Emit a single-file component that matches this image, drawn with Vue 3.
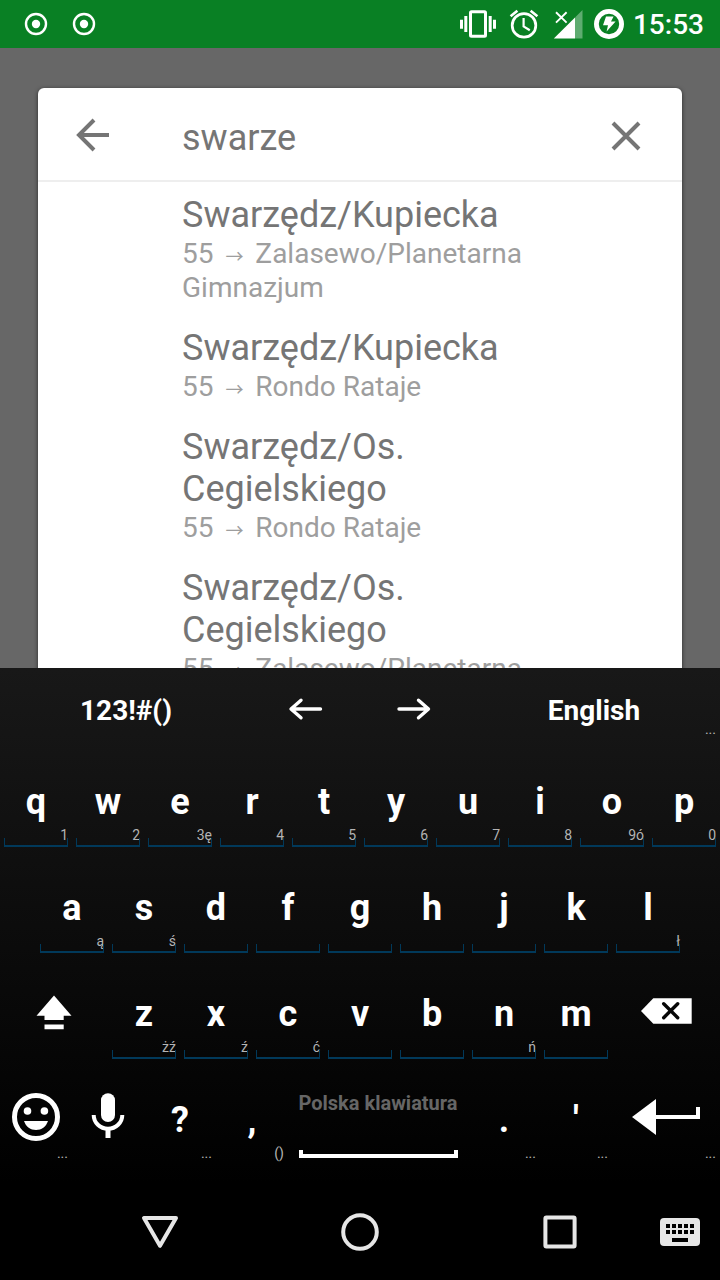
<script setup>
import { ref } from 'vue'

const query = ref('swarze')

const results = [
  { stop: 'Swarzędz/Kupiecka', line: '55', direction: 'Zalasewo/Planetarna Gimnazjum' },
  { stop: 'Swarzędz/Kupiecka', line: '55', direction: 'Rondo Rataje' },
  { stop: 'Swarzędz/Os. Cegielskiego', line: '55', direction: 'Rondo Rataje' },
  { stop: 'Swarzędz/Os. Cegielskiego', line: '55', direction: 'Zalasewo/Planetarna Gimnazjum' }
]

const topRow = [
  ['q', '1'], ['w', '2'], ['e', '3ę'], ['r', '4'], ['t', '5'],
  ['y', '6'], ['u', '7'], ['i', '8'], ['o', '9ó'], ['p', '0']
]
const homeRow = [
  ['a', 'ą'], ['s', 'ś'], ['d', ''], ['f', ''], ['g', ''],
  ['h', ''], ['j', ''], ['k', ''], ['l', 'ł']
]
const bottomRow = [
  ['z', 'żź'], ['x', 'ź'], ['c', 'ć'], ['v', ''], ['b', ''], ['n', 'ń'], ['m', '']
]
</script>

<template>
  <div class="screen">
    <header class="status">
      <div class="notices">
        <svg v-for="n in 2" :key="n" width="24" height="24" viewBox="0 0 24 24" aria-hidden="true">
          <circle cx="12" cy="12" r="10" fill="none" stroke="#fff" stroke-width="2.4" />
          <circle cx="12" cy="12" r="4.2" fill="#fff" />
        </svg>
      </div>
      <div class="system">
        <svg width="39" height="48" viewBox="460 0 39 48" aria-hidden="true">
          <rect x="470.5" y="11.8" width="15" height="24.4" rx="1" fill="none" stroke="#fff" stroke-width="3" />
          <path d="M460 19.7h3v9h-3zM464.3 16h3v16h-3zM488.7 16h3v16h-3zM493 19.7h3v9h-3z" fill="#fff" />
        </svg>
        <svg width="35" height="48" viewBox="508 0 35 48" aria-hidden="true">
          <g fill="none" stroke="#fff" stroke-width="2.7">
            <circle cx="524" cy="25.4" r="11.8" />
            <path d="M523.6 18v8.4l6.2 3.8" stroke-width="2.2" />
            <path d="M510.6 16.2l6.8-5.4M530.6 10.8l6.8 5.4" />
          </g>
        </svg>
        <svg width="33" height="48" viewBox="552 0 33 48" aria-hidden="true">
          <path d="M582.5 10v28.6H575V17.5z" fill="#fff" opacity=".35" />
          <path d="M575 17.5v21.1h-21.2z" fill="#fff" />
          <path d="M556 12.2l10.6 10.4M566.6 12.2L556 22.6" stroke="#fff" stroke-width="1.9" />
        </svg>
        <svg width="30" height="48" viewBox="594 0 30 48" aria-hidden="true">
          <circle cx="609" cy="24" r="12.6" fill="none" stroke="#fff" stroke-width="4.8" />
          <path d="M606 16.5h7.6l-2.6 5h4.6l-9 10 1.4-6.2h-5z" fill="#fff" />
        </svg>
        <time>15:53</time>
      </div>
    </header>

    <main class="backdrop">
      <section class="card">
        <form class="search" @submit.prevent>
          <button type="button" class="plain" aria-label="Wstecz">
            <svg width="40" height="40" viewBox="74 115 40 40">
              <path d="M94 120L79 135l15 15M79 135h30" fill="none" stroke="#757575" stroke-width="4" />
            </svg>
          </button>
          <input v-model="query" type="text" aria-label="Szukaj" />
          <button type="button" class="plain" aria-label="Wyczyść">
            <svg width="40" height="40" viewBox="606 115 40 40">
              <path d="M613 123l26 26M639 123l-26 26" fill="none" stroke="#757575" stroke-width="4" />
            </svg>
          </button>
        </form>
        <ul class="results">
          <li v-for="(r, i) in results" :key="i">
            <div class="stop">{{ r.stop }}</div>
            <div class="route">{{ r.line }} <span class="arrow">→</span> {{ r.direction }}</div>
          </li>
        </ul>
      </section>
    </main>

    <section class="keyboard" aria-label="Klawiatura">
      <div class="row tools">
        <button type="button" class="key w7 word">123!#()</button>
        <button type="button" class="key w3" aria-label="W lewo">
          <svg width="40" height="40" viewBox="286 690 40 40">
            <path d="M301 700.2L291 709l10 8.8M291.500 709H320.500" fill="none" stroke="#fff" stroke-width="3.4" stroke-linecap="round" stroke-linejoin="round" />
          </svg>
        </button>
        <button type="button" class="key w3" aria-label="W prawo">
          <svg width="40" height="40" viewBox="394 690 40 40">
            <path d="M418.500 700.2l10 8.800-10 8.800M399 709h29" fill="none" stroke="#fff" stroke-width="3.4" stroke-linecap="round" stroke-linejoin="round" />
          </svg>
        </button>
        <button type="button" class="key w7 word">English<span class="hint">...</span></button>
      </div>

      <div class="row">
        <button v-for="k in topRow" :key="k[0]" type="button" class="key w2 char lined">
          {{ k[0] }}<span class="hint">{{ k[1] }}</span>
        </button>
      </div>

      <div class="row home">
        <button v-for="k in homeRow" :key="k[0]" type="button" class="key w2 char lined">
          {{ k[0] }}<span class="hint">{{ k[1] }}</span>
        </button>
      </div>

      <div class="row">
        <button type="button" class="key w3" aria-label="Shift">
          <svg width="52" height="52" viewBox="28 987 52 52">
            <path d="M54 995.500L71.500 1015.700H63.700V1020H44.500V1015.700H36.500zM44.500 1024.600h19.200v4.600H44.500z" fill="#fff" />
          </svg>
        </button>
        <button v-for="k in bottomRow" :key="k[0]" type="button" class="key w2 char lined">
          {{ k[0] }}<span class="hint">{{ k[1] }}</span>
        </button>
        <button type="button" class="key w3" aria-label="Backspace">
          <svg width="52" height="52" viewBox="640 987 52 52">
            <path d="M641 1011l12.300-12.700h38.400v25.400h-38.400z" fill="#fff" />
            <path d="M663.700 1003.700l14 14M677.700 1003.700l-14 14" stroke="#060606" stroke-width="3.4" stroke-linecap="round" />
          </svg>
        </button>
      </div>

      <div class="row">
        <button type="button" class="key w2" aria-label="Emoji">
          <svg width="52" height="52" viewBox="10 1093 52 52">
            <circle cx="36" cy="1117" r="21.500" fill="none" stroke="#fff" stroke-width="5" />
            <circle cx="27.500" cy="1111" r="3.800" fill="#fff" />
            <circle cx="44.400" cy="1111" r="3.800" fill="#fff" />
            <path d="M24 1121H48C46 1127 41.500 1130 36 1130S26 1127 24 1121z" fill="#fff" />
          </svg>
          <span class="hint">...</span>
        </button>
        <button type="button" class="key w2" aria-label="Mikrofon">
          <svg width="52" height="52" viewBox="82 1093 52 52">
            <rect x="101" y="1093.300" width="14" height="28.700" rx="7" fill="#fff" />
            <path d="M93.700 1115a14.300 13.800 0 0 0 28.600 0" fill="none" stroke="#fff" stroke-width="4" />
            <path d="M105.500 1129h5v9h-5z" fill="#fff" />
          </svg>
        </button>
        <button type="button" class="key w2 char">?<span class="hint">...</span></button>
        <button type="button" class="key w2 char">,<span class="hint">()</span></button>
        <button type="button" class="key w5">
          <span class="space">
            <span class="layout">Polska klawiatura</span>
            <span class="bar"></span>
          </span>
        </button>
        <button type="button" class="key w2 char">.<span class="hint">...</span></button>
        <button type="button" class="key w2 char">'<span class="hint">...</span></button>
        <button type="button" class="key w3" aria-label="Enter">
          <svg width="70" height="52" viewBox="631 1093 70 52">
            <path d="M632 1117l24-18v16h40v-8h4v12h-44v16z" fill="#fff" />
          </svg>
          <span class="hint">...</span>
        </button>
      </div>
    </section>

    <nav class="nav">
      <button type="button" class="plain" aria-label="Wstecz">
        <svg width="40" height="40" viewBox="140 1212 40 40">
          <path d="M144 1218h32L160 1245.800z" fill="none" stroke="#e6e6e6" stroke-width="4" stroke-linejoin="round" />
        </svg>
      </button>
      <button type="button" class="plain" aria-label="Ekran główny">
        <svg width="40" height="40" viewBox="0 0 40 40">
          <circle cx="20" cy="20" r="16.800" fill="none" stroke="#e6e6e6" stroke-width="4" />
        </svg>
      </button>
      <button type="button" class="plain" aria-label="Ostatnie">
        <svg width="40" height="40" viewBox="0 0 40 40">
          <rect x="5.400" y="5.400" width="29.200" height="29.200" rx="1" fill="none" stroke="#e6e6e6" stroke-width="4" />
        </svg>
      </button>
      <button type="button" class="plain ime" aria-label="Wybierz klawiaturę">
        <svg width="40" height="40" viewBox="0 0 40 40">
          <rect x="0" y="6" width="40" height="28" rx="4" fill="#e6e6e6" />
          <path d="M6 12h4v4h-4zM12 12h4v4h-4zM18 12h4v4h-4zM24 12h4v4h-4zM30 12h4v4h-4zM6 18h4v4h-4zM12 18h4v4h-4zM18 18h4v4h-4zM24 18h4v4h-4zM30 18h4v4h-4zM12 26h16v4H12z" fill="#000" />
        </svg>
      </button>
    </nav>
  </div>
</template>

<style>
body {
  background: #000;
}
</style>

<style scoped>
.screen {
  display: flex;
  flex-direction: column;
  height: 100vh;
  font-family: Roboto, "Noto Sans", sans-serif;
}

svg {
  display: block;
}

button {
  margin: 0;
  padding: 0;
  border: 0;
  background: none;
  font-family: inherit;
  color: inherit;
}

.plain {
  display: flex;
  align-items: center;
  justify-content: center;
}

.status {
  flex: none;
  display: flex;
  justify-content: space-between;
  align-items: center;
  height: 48px;
  padding: 0 16px 0 24px;
  background: #098024;
  color: #fff;
}

.notices {
  display: flex;
  gap: 24px;
}

.system {
  display: flex;
  align-items: center;
  gap: 9px;
}

.system time {
  padding-top: 2px;
  font-size: 28px;
  font-weight: 500;
  line-height: 34px;
}

.backdrop {
  flex: 1;
  min-height: 0;
  overflow: hidden;
  padding: 40px 38px 0;
  background: #676767;
}

.card {
  border-radius: 6px 6px 0 0;
  background: #fff;
  box-shadow: 0 1px 4px rgba(0, 0, 0, 0.6);
}

.search {
  display: flex;
  align-items: center;
  height: 90px;
  padding: 2px 36px 0;
  border-bottom: 2px solid #eee;
}

.search input {
  flex: 1;
  min-width: 0;
  height: 48px;
  margin: 6px 0 0 68px;
  padding: 0;
  border: 0;
  outline: 0;
  background: none;
  font-family: inherit;
  font-size: 36px;
  color: #757575;
}

.results {
  display: flex;
  flex-direction: column;
  gap: 22px;
  margin: 0;
  padding: 12px 80px 12px 144px;
  list-style: none;
}

.stop {
  font-size: 36px;
  line-height: 42px;
  color: #757575;
}

.route {
  margin-top: 1px;
  font-size: 28px;
  line-height: 34px;
  color: #9e9e9e;
}

.arrow {
  display: inline-block;
  width: 28px;
  font-family: "Noto Sans CJK SC", sans-serif;
  font-size: 18px;
  line-height: 20px;
  text-align: center;
}

.keyboard {
  flex: none;
  padding-bottom: 12px;
  background: linear-gradient(#181818, #000);
  color: #fff;
}

.row {
  display: flex;
  height: 106px;
}

.tools {
  height: 80px;
}

.home {
  padding: 0 5%;
}

.key {
  position: relative;
  display: flex;
  align-items: center;
  justify-content: center;
  flex-basis: 0;
  min-width: 0;
  font-size: 36px;
  font-weight: 700;
  line-height: 42px;
}

.w2 { flex-grow: 2; }
.w3 { flex-grow: 3; }
.w5 { flex-grow: 5; }
.w7 { flex-grow: 7; }

.char {
  padding-top: 2px;
}

.tools .key {
  padding-top: 4px;
  font-size: 28px;
}

.tools .word {
  padding-top: 6px;
}

.lined::after {
  content: "";
  position: absolute;
  left: 4px;
  right: 4px;
  bottom: 7px;
  height: 7px;
  border: solid #01395a;
  border-width: 0 1px 2px;
}

.hint {
  position: absolute;
  right: 4px;
  bottom: 11px;
  font-size: 14px;
  font-weight: 400;
  line-height: 16px;
  color: #b4b4b4;
}

.space {
  flex: 1;
  display: flex;
  flex-direction: column;
  gap: 34px;
  margin: 10px 12px 0;
}

.layout {
  font-size: 20px;
  line-height: 26px;
  text-align: center;
  white-space: nowrap;
  color: #666;
}

.bar {
  height: 4px;
  border: solid #fff;
  border-width: 0 4px 4px;
}

.nav {
  flex: none;
  display: flex;
  height: 96px;
  padding: 0 20px 0 60px;
  background: #000;
}

.nav .plain {
  flex: 1;
}

.nav .ime {
  flex: none;
}
</style>
